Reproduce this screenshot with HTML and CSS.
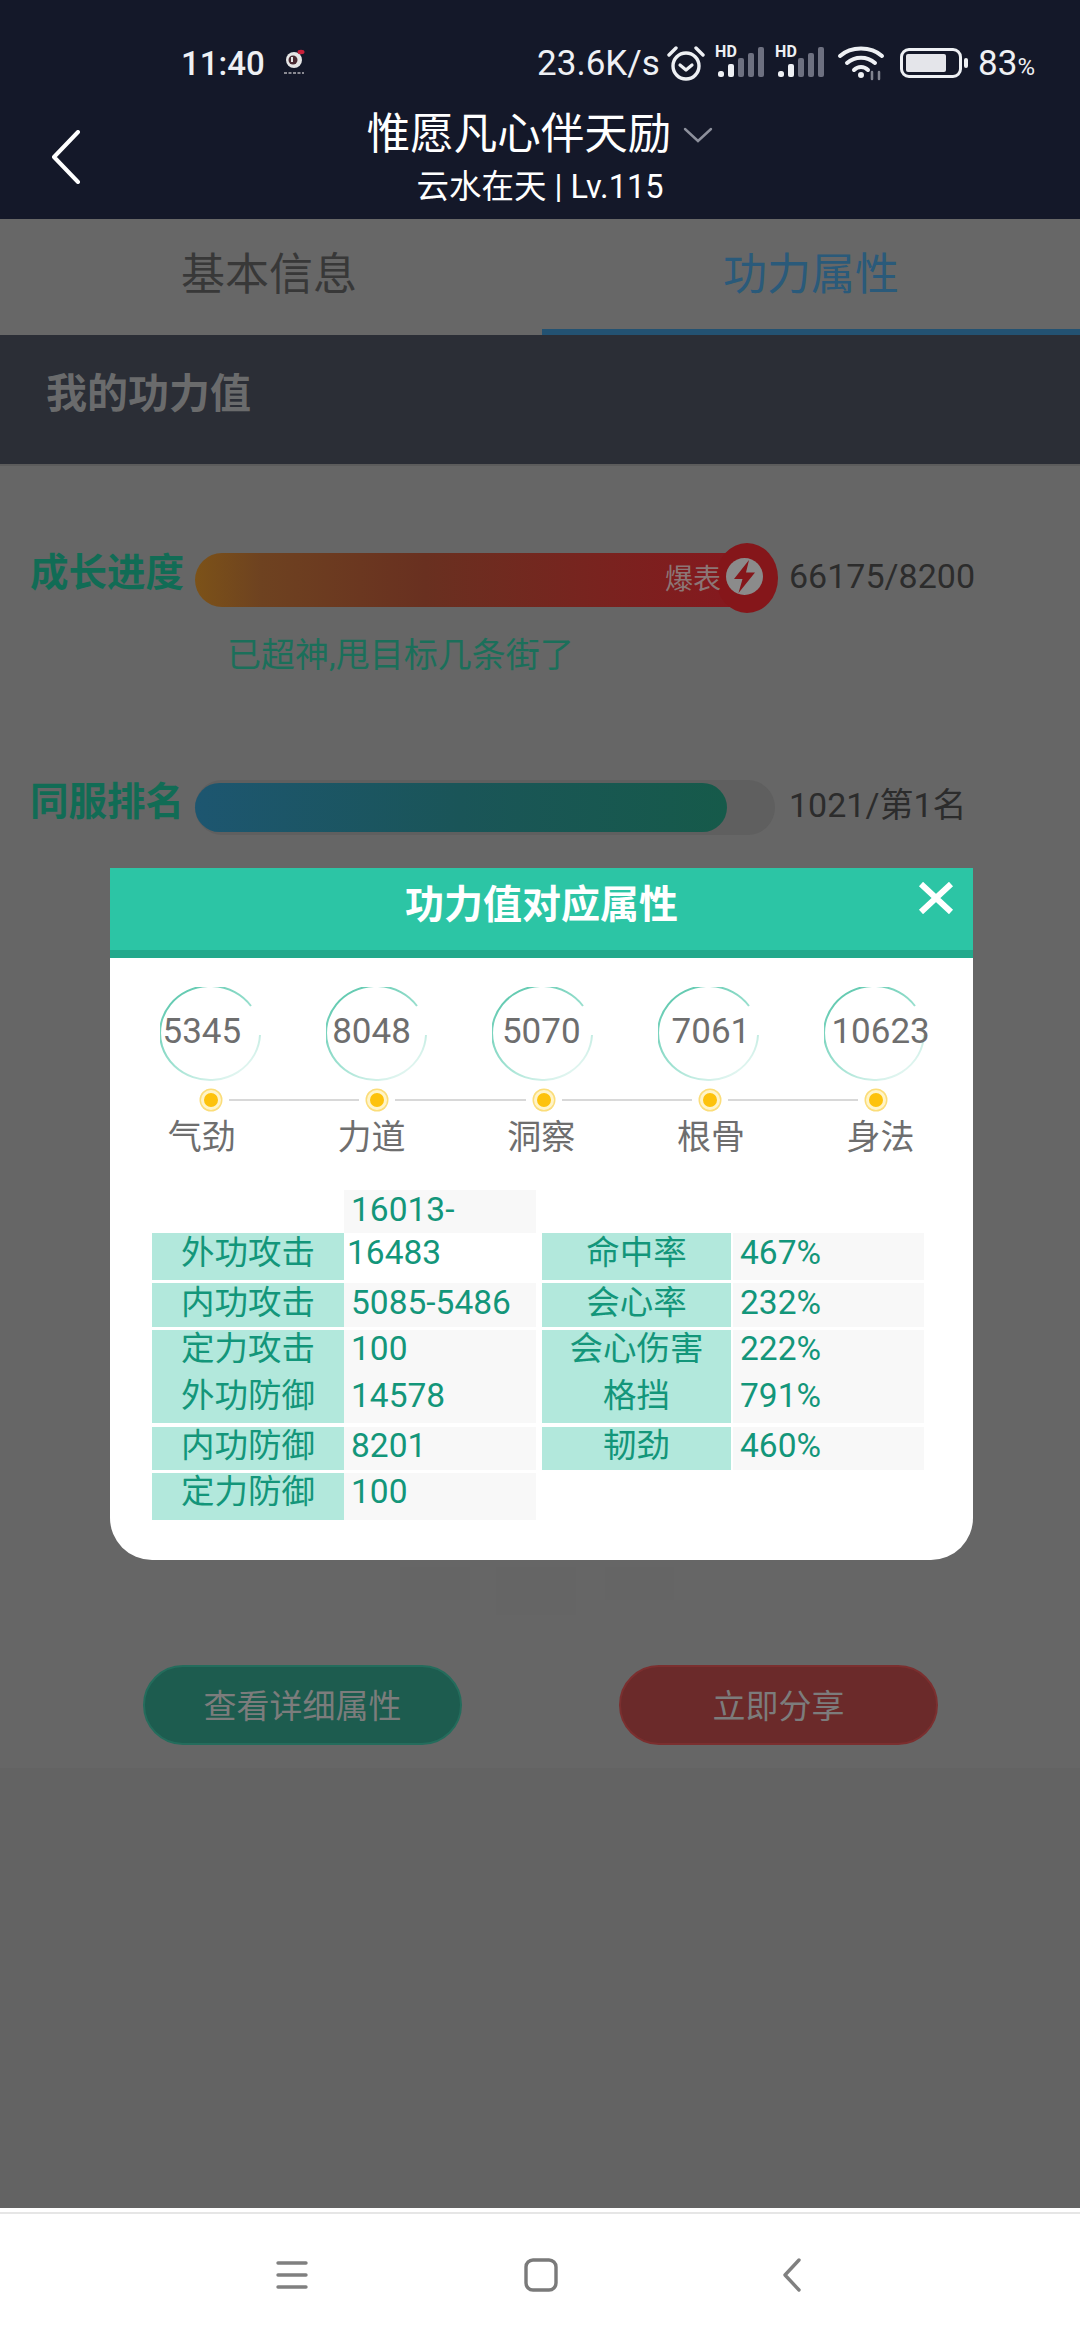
FILE: index.html
```html
<!DOCTYPE html>
<html lang="zh">
<head>
<meta charset="utf-8">
<title>功力属性</title>
<link rel="stylesheet" href="styles.css">
</head>
<body>
<svg class="defs" width="0" height="0">
  <defs>
    <linearGradient id="ringGrad" gradientUnits="userSpaceOnUse" x1="20" y1="0" x2="85" y2="92">
      <stop offset="0" stop-color="#5ec8ae"/>
      <stop offset="0.55" stop-color="#a0e2d2"/>
      <stop offset="1" stop-color="#eef9f6"/>
    </linearGradient>
    <symbol id="ring" viewBox="0 0 102 96">
      <path d="M91 19 A50 47 0 1 0 100 48" fill="none" stroke="url(#ringGrad)" stroke-width="2"/>
    </symbol>
    <symbol id="signal" viewBox="0 0 50 32">
      <rect x="3" y="25" width="6" height="6" rx="2.5" fill="#eef0f4"/>
      <rect x="13" y="18" width="6" height="13" rx="2" fill="#eef0f4"/>
      <rect x="23" y="12" width="6" height="19" rx="2" fill="#6d7080"/>
      <rect x="33" y="7" width="6" height="24" rx="2" fill="#6d7080"/>
      <rect x="43" y="1" width="6" height="30" rx="2" fill="#6d7080"/>
    </symbol>
  </defs>
</svg>
<div class="page">
  <header class="header">
    <div class="status">
      <div class="status-left">
        <span class="time">11:40</span>
        <svg class="app-icon" width="24" height="30" viewBox="0 0 24 30"><circle cx="12" cy="12" r="8" fill="#e6e6e6"/><circle cx="11" cy="12" r="4.5" fill="#4a2a32"/><rect x="9" y="9" width="2" height="5" fill="#e6e6e6"/><ellipse cx="19" cy="4" rx="3.5" ry="2.2" fill="#c9203a"/><path d="M2 25h20" stroke="#8a8a92" stroke-width="2" stroke-dasharray="3 1.5"/></svg>
      </div>
      <div class="status-right">
        <span class="speed">23.6K/s</span>
        <svg class="alarm" width="38" height="36" viewBox="0 0 38 36" fill="none" stroke="#eef0f4"><circle cx="19" cy="21" r="13" stroke-width="3.4"/><path d="M13 20l6 5 6-5" stroke-width="3.2" stroke-linecap="round" stroke-linejoin="round"/><path d="M2 10L9 3M36 10L29 3" stroke-width="3.4" stroke-linecap="round"/></svg>
        <span class="sig"><span class="hd">HD</span><svg class="sig-bars" width="50" height="32"><use href="#signal"/></svg></span>
        <span class="sig"><span class="hd">HD</span><svg class="sig-bars" width="50" height="32"><use href="#signal"/></svg></span>
        <svg class="wifi" width="50" height="36" viewBox="0 0 50 36" fill="none" stroke="#eef0f4" stroke-width="4" stroke-linecap="round"><path d="M3 11C14 1 34 1 45 11"/><path d="M10 18C18 11 30 11 38 18"/><path d="M17 25C21 21 27 21 31 25"/><circle cx="24" cy="30" r="2" fill="#eef0f4" stroke-width="2"/><path d="M35 27v7M42 27v7" stroke="#80838f" stroke-width="2.5"/></svg>
        <span class="battery"><span class="battery-fill"></span></span><span class="nub"></span>
        <span class="pct">83<small>%</small></span>
      </div>
    </div>
    <div class="nav">
      <svg class="back" width="30" height="54" viewBox="0 0 30 54" fill="none" stroke="#fff" stroke-width="4" stroke-linecap="round" stroke-linejoin="round"><path d="M27 2L3 27l24 25"/></svg>
      <div class="nav-center">
        <div class="title-row">
          <span class="title">惟愿凡心伴天励</span>
          <svg width="30" height="16" viewBox="0 0 30 16" fill="none" stroke="#8d909c" stroke-width="2.4" stroke-linecap="round"><path d="M2 2l13 12L28 2"/></svg>
        </div>
        <div class="subtitle">云水在天 | Lv.115</div>
      </div>
    </div>
  </header>

  <nav class="tabs">
    <div class="tab">基本信息</div>
    <div class="tab active">功力属性</div>
  </nav>

  <div class="section-head">我的功力值</div>

  <main class="main">
    <div class="stat stat-growth">
      <div class="stat-label">成长进度</div>
      <div class="growth-track">
        <div class="growth-fill"></div>
        <div class="knob">
          <svg width="37" height="37" viewBox="0 0 37 37"><circle cx="18.5" cy="18.5" r="18.5" fill="#8b8b8b"/><path d="M23 2L8 21h8.5l-4 14L29 14.5h-9z" fill="#85161a"/></svg>
        </div>
        <span class="burst">爆表</span>
      </div>
      <div class="stat-value">66175/8200</div>
    </div>
    <div class="growth-note">已超神,甩目标几条街了</div>

    <div class="stat stat-rank">
      <div class="stat-label">同服排名</div>
      <div class="rank-track"><div class="rank-fill" style="width:532px"></div></div>
      <div class="stat-value">1021/第1名</div>
    </div>

    <div class="ghosts">
      <span class="ghost ghost-a"></span>
      <span class="ghost ghost-b"></span>
      <span class="ghost ghost-c"></span>
    </div>

    <div class="actions">
      <div class="btn btn-green">查看详细属性</div>
      <div class="btn btn-red">立即分享</div>
    </div>
  </main>
  <div class="filler"></div>

  <footer class="sysnav">
    <svg width="32" height="30" viewBox="0 0 32 30" fill="none" stroke="#808080" stroke-width="3.4" stroke-linecap="round"><path d="M2 3h28M2 15h28M2 27h28"/></svg>
    <svg width="34" height="34" viewBox="0 0 34 34" fill="none" stroke="#7a7a7a" stroke-width="3.4"><rect x="2" y="2" width="30" height="30" rx="7"/></svg>
    <svg width="20" height="34" viewBox="0 0 20 34" fill="none" stroke="#808080" stroke-width="3.4" stroke-linecap="round" stroke-linejoin="round"><path d="M17 2L3 17l14 15"/></svg>
  </footer>

  <section class="modal">
    <div class="modal-head">
      <span class="modal-title">功力值对应属性</span>
      <svg class="modal-close" width="36" height="32" viewBox="0 0 36 32" fill="none" stroke="#fff" stroke-width="6"><path d="M3 2l30 28M33 2L3 30"/></svg>
    </div>
    <div class="rings">
      <div class="ring-row">
        <svg class="ring-svg" width="102" height="96"><use href="#ring"/></svg>
        <svg class="ring-svg" width="102" height="96"><use href="#ring"/></svg>
        <svg class="ring-svg" width="102" height="96"><use href="#ring"/></svg>
        <svg class="ring-svg" width="102" height="96"><use href="#ring"/></svg>
        <svg class="ring-svg" width="102" height="96"><use href="#ring"/></svg>
      </div>
      <div class="num-row">
        <span>5345</span><span>8048</span><span>5070</span><span>7061</span><span>10623</span>
      </div>
    </div>
    <div class="timeline">
      <span class="dot"></span><span class="line"></span>
      <span class="dot"></span><span class="line"></span>
      <span class="dot"></span><span class="line"></span>
      <span class="dot"></span><span class="line"></span>
      <span class="dot"></span>
    </div>
    <div class="ring-labels">
      <span>气劲</span><span>力道</span><span>洞察</span><span>根骨</span><span>身法</span>
    </div>

    <div class="attrs">
      <div class="attr-row r0"><span class="blank"></span><span class="val">16013-</span></div>
      <div class="attr-row r1"><span class="key">外功攻击</span><span class="val wrapped">16483</span><span class="key right">命中率</span><span class="val">467%</span></div>
      <div class="attr-row r2"><span class="key">内功攻击</span><span class="val">5085-5486</span><span class="key right">会心率</span><span class="val">232%</span></div>
      <div class="attr-row r3"><span class="key">定力攻击</span><span class="val">100</span><span class="key right">会心伤害</span><span class="val">222%</span></div>
      <div class="attr-row r4"><span class="key">外功防御</span><span class="val">14578</span><span class="key right">格挡</span><span class="val">791%</span></div>
      <div class="attr-row r5"><span class="key">内功防御</span><span class="val">8201</span><span class="key right">韧劲</span><span class="val">460%</span></div>
      <div class="attr-row r6"><span class="key">定力防御</span><span class="val">100</span></div>
    </div>
  </section>
</div>
</body>
</html>
```

FILE: styles.css
```css
* { box-sizing: border-box; }
html, body { margin: 0; padding: 0; }
body {
  width: 1080px;
  height: 2340px;
  overflow: hidden;
  font-family: Roboto, "Noto Sans CJK SC", sans-serif;
  background: #666;
}
.defs { position: absolute; }
.page {
  position: relative;
  width: 1080px;
  height: 2340px;
  display: flex;
  flex-direction: column;
}

/* header */
.header {
  height: 219px;
  background: #141829;
  color: #fff;
  padding-top: 38px;
  flex: none;
}
.status {
  height: 50px;
  display: flex;
  align-items: center;
  justify-content: space-between;
  padding: 0 45px 0 181px;
  color: #eef0f4;
}
.status-left { display: flex; align-items: center; gap: 17px; }
.time { font-size: 33px; font-weight: 500; }
.status-right { display: flex; align-items: center; }
.speed { font-size: 35px; width: 130px; margin-left: -2px; }
.alarm { margin-right: 10px; }
.sig { position: relative; width: 50px; height: 32px; margin-right: 10px; margin-top: -2px; }
.sig-bars { display: block; }
.hd {
  position: absolute;
  left: 0;
  top: -1px;
  font-size: 16px;
  line-height: 14px;
  font-weight: 700;
  color: #eef0f4;
}
.wifi { margin: 0 13px 0 2px; }
.battery {
  width: 62px;
  height: 30px;
  border: 3.5px solid #eef0f4;
  border-radius: 9px;
  padding: 3px;
  display: block;
}
.battery-fill { display: block; width: 80%; height: 100%; background: #e4e5ea; border-radius: 2px; }
.nub { width: 4px; height: 10px; margin: 0 10px 0 2px; background: #eef0f4; border-radius: 2px; }
.pct { font-size: 35px; }
.pct small { font-size: 24px; }

.nav {
  margin-top: 19px;
  display: grid;
  grid-template-columns: 1fr auto 1fr;
  align-items: center;
}
.back { margin: -2px 0 0 51px; }
.nav-center { display: flex; flex-direction: column; align-items: center; }
.title-row { display: flex; align-items: center; gap: 12px; height: 56px; margin-bottom: 2px; }
.title { font-size: 43.5px; line-height: 56px; color: #fff; }
.subtitle { font-size: 32.5px; line-height: 44px; color: #fff; }

/* tabs */
.tabs { display: flex; height: 116px; background: #676767; flex: none; }
.tab {
  flex: 1;
  text-align: center;
  font-size: 44px;
  line-height: 112px;
  color: #383838;
}
.tab.active {
  color: #2a5a7a;
  margin-left: 4px;
  border-bottom: 6px solid #235272;
  border-radius: 5px 5px 0 0;
}

.section-head {
  height: 131px;
  flex: none;
  background: #2b2e36;
  color: #6a6b6c;
  font-size: 41px;
  font-weight: 700;
  line-height: 118px;
  padding-left: 46px;
  border-bottom: 2px solid #5c5c5c;
}

/* main */
.main { background: #666; flex: none; padding: 87px 0 23px 30px; }
.stat { display: flex; align-items: flex-start; }
.stat-label { width: 165px; font-size: 38.5px; font-weight: 700; color: #116c55; white-space: nowrap; }
.stat-value { font-size: 34px; color: #2c2c2c; margin-left: 14px; white-space: nowrap; }
.stat-growth .stat-label { line-height: 40px; }
.stat-growth .stat-value { line-height: 46px; }
.stat-rank .stat-label { line-height: 44px; }
.stat-rank .stat-value { line-height: 50px; }

.growth-track { position: relative; width: 580px; height: 54px; }
.growth-fill {
  width: 549px;
  height: 54px;
  border-radius: 27px 0 0 27px;
  background: linear-gradient(90deg, #7c5218 0%, #6e4220 12%, #693020 42%, #86181e 100%);
}
.burst {
  position: absolute;
  left: 470px;
  top: 0;
  font-size: 28px;
  line-height: 54px;
  color: #8c7676;
}
.knob {
  position: absolute;
  left: 521px;
  top: -10px;
  width: 62px;
  height: 70px;
  border-radius: 50%;
  background: #85161a;
  display: flex;
  align-items: center;
  justify-content: center;
  padding: 0 6px 3px 0;
}
.growth-note {
  margin: 24px 0 0 197px;
  font-size: 34px;
  line-height: 48px;
  color: #1b6f5a;
}
.stat-rank { margin-top: 101px; }
.rank-track {
  width: 580px;
  height: 55px;
  border-radius: 28px;
  background: #5f5f5f;
  padding-top: 3px;
}
.rank-fill {
  height: 49px;
  border-radius: 25px;
  background: linear-gradient(90deg, #1d5670 0%, #1a5558 50%, #165a4a 100%);
}
.ghosts { margin-top: 732px; height: 48px; display: flex; align-items: flex-start; padding-left: 370px; }
.ghost { display: block; background: #656565; }
.ghost-a { width: 70px; height: 33px; }
.ghost-b { width: 80px; height: 48px; margin-left: 26px; }
.ghost-c { width: 69px; height: 33px; margin-left: 29px; }

.actions { margin-top: 50px; display: flex; padding-left: 113px; gap: 157px; }
.btn {
  width: 319px;
  height: 80px;
  border-radius: 40px;
  text-align: center;
  font-size: 33px;
  line-height: 80px;
  color: #7c7c7c;
}
.btn-green { background: #1d5c4f; border: 2px solid #246c5c; }
.btn-red { background: #6b2a2a; border: 2px solid #7b2f2f; }

.filler { flex: 1; background: #636363; }

.sysnav {
  flex: none;
  height: 132px;
  background: #fff;
  border-top: 2px solid #fff;
  box-shadow: inset 0 2px 0 #fff, inset 0 4px 0 #e6e6e6;
  display: grid;
  grid-template-columns: 248px 258px 20px;
  justify-content: start;
  align-items: center;
  padding: 0 0 0 276px;
}

/* modal */
.modal {
  position: absolute;
  left: 110px;
  top: 868px;
  width: 863px;
  height: 692px;
  background: #fff;
  border-radius: 0 0 42px 42px;
  overflow: hidden;
}
.modal-head {
  position: relative;
  height: 90px;
  background: #2cc5a5;
  border-bottom: 8px solid #23a98c;
  text-align: center;
}
.modal-title { font-size: 39px; font-weight: 700; line-height: 74px; color: #fff; }
.modal-close { position: absolute; left: 808px; top: 14px; }
.rings { display: grid; padding-top: 29px; }
.ring-row, .num-row { grid-area: 1 / 1; display: grid; }
.ring-row {
  grid-template-columns: repeat(5, 166px);
  padding-left: 50px;
  height: 96px;
}
.ring-svg { display: block; }
.num-row {
  grid-template-columns: repeat(5, 169.7px);
  padding-left: 7px;
  font-size: 35px;
  line-height: 90px;
  color: #6e6e6e;
  text-align: center;
}
.timeline {
  margin-top: 7px;
  padding: 0 87px 0 91px;
  display: flex;
  align-items: center;
  height: 20px;
}
.dot {
  flex: none;
  width: 20px;
  height: 20px;
  border-radius: 50%;
  background: #fdc20c;
  border: 3px solid #fff4c8;
  box-shadow: 0 0 0 1.5px #fbdd7a;
}
.line { flex: 1; height: 1.5px; margin: 0 8px; background: #d8d8d8; }
.ring-labels {
  display: grid;
  grid-template-columns: repeat(5, 169.7px);
  margin-top: 3px;
  padding-left: 7px;
  font-size: 34px;
  line-height: 48px;
  color: #6e6e6e;
  text-align: center;
}
.attrs { margin: 29px 0 0 42px; font-size: 33.5px; color: #13967a; }
.attr-row {
  display: grid;
  grid-template-columns: 192px 192px 197px 191px;
  line-height: 40px;
}
.key { background: #b2e8dc; text-align: center; }
.key.right { margin-left: 6px; margin-right: 2px; }
.val { background: #f8f8f8; padding-left: 7px; }
.val.wrapped { background: #fff; padding-left: 3px; }
.r0 { height: 43px; }
.r1 { height: 47px; }
.r2 { height: 44px; margin-top: 3px; }
.r3 { height: 46px; margin-top: 3px; line-height: 38px; }
.r4 { height: 47px; }
.r5 { height: 43px; margin-top: 4px; line-height: 38px; }
.r6 { height: 47px; margin-top: 3px; line-height: 38px; }
```
